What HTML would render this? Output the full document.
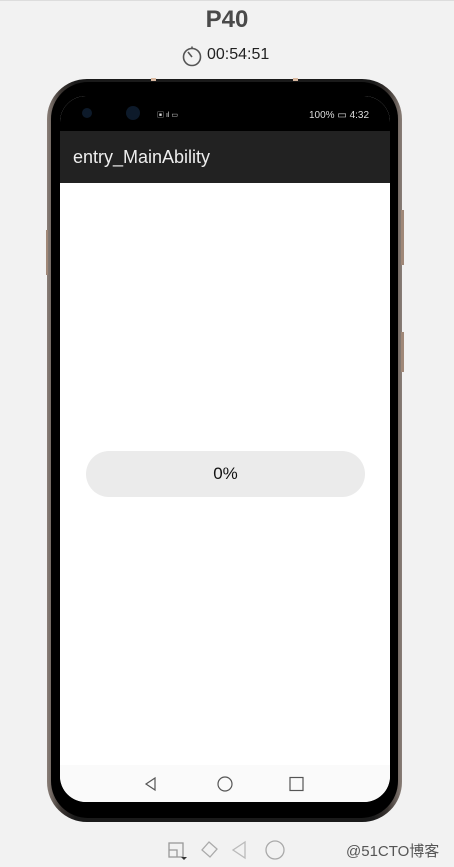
<!DOCTYPE html>
<html><head><meta charset="utf-8"><style>
*{margin:0;padding:0;box-sizing:border-box}
body{width:454px;height:867px;background:#f2f2f2;position:relative;overflow:hidden;font-family:"Liberation Sans","Noto Sans CJK SC",sans-serif}
.abs{position:absolute}
</style></head><body>
<div class="abs" style="left:0;top:0;width:454px;height:1px;background:#ddd"></div>
<div class="abs" style="left:0;top:6px;width:454px;text-align:center;font-size:24px;font-weight:bold;color:#4a4a4a">P40</div>
<svg class="abs" style="left:181px;top:45px" width="22" height="22" viewBox="0 0 22 22"><circle cx="11" cy="12" r="8.5" fill="none" stroke="#555" stroke-width="1.6"/><path d="M11 3.5V1.5M7 7l4 5" stroke="#555" stroke-width="1.6" fill="none"/></svg>
<div class="abs" style="left:207px;top:46px;font-size:16px;color:#222">00:54:51</div>

<div class="abs" style="left:47px;top:79px;width:355px;height:743px;border-radius:40px;background:linear-gradient(90deg,#8a7f78,#3a3431 4%,#1a1a1a 8%,#1a1a1a 92%,#3a3431 96%,#8a7f78);"></div>
<div class="abs" style="left:51px;top:82px;width:347px;height:736px;border-radius:37px;background:#000"></div>
<div class="abs" style="left:151px;top:78px;width:5px;height:3px;background:#d8b8a0"></div>
<div class="abs" style="left:293px;top:78px;width:5px;height:3px;background:#d8b8a0"></div>
<div class="abs" style="left:401px;top:210px;width:3px;height:55px;background:#a08878"></div>
<div class="abs" style="left:401px;top:332px;width:3px;height:40px;background:#a08878"></div>
<div class="abs" style="left:46px;top:230px;width:2px;height:45px;background:#a08878"></div>

<div class="abs" style="left:60px;top:96px;width:330px;height:706px;border-radius:26px;overflow:hidden;background:#fff">
  <div class="abs" style="left:0;top:0;width:330px;height:35px;background:#000;color:#ddd;font-size:10px">
    <div class="abs" style="left:22px;top:12px;width:10px;height:10px;border-radius:50%;background:#0d1a2a"></div>
    <div class="abs" style="left:66px;top:10px;width:14px;height:14px;border-radius:50%;background:#0d1a2a"></div>
    <div class="abs" style="left:97px;top:14px;font-size:7px;color:#ddd">▣ ıl ▭</div>
    <div class="abs" style="left:249px;top:14px">100% ▭ 4:32</div>
  </div>
  <div class="abs" style="left:0;top:35px;width:330px;height:52px;background:#222"></div>
  <div class="abs" style="left:13px;top:51px;color:#eee;font-size:18px">entry_MainAbility</div>
  <div class="abs" style="left:26px;top:355px;width:279px;height:46px;border-radius:23px;background:#ebebeb;text-align:center;line-height:46px;font-size:17px;color:#111">0%</div>
  <div class="abs" style="left:0;top:669px;width:330px;height:37px;background:#fafafa"></div>
  <svg class="abs" style="left:80px;top:680px" width="180" height="16"><path d="M15 2L6 8l9 6z" fill="none" stroke="#555" stroke-width="1.2"/><circle cx="85" cy="8" r="7" fill="none" stroke="#555" stroke-width="1.2"/><rect x="150" y="1.5" width="13" height="13" fill="none" stroke="#555" stroke-width="1.2"/></svg>
</div>

<svg class="abs" style="left:166px;top:838px" width="125" height="24"><rect x="3" y="5" width="14" height="14" fill="none" stroke="#999" stroke-width="1.3"/><path d="M3 12h8v7" fill="none" stroke="#999" stroke-width="1.3"/><path d="M15 19h6l-3 3z" fill="#333"/><path d="M43 4l8 7-7 8-8-7z" fill="none" stroke="#aaa" stroke-width="1.3"/><path d="M79 4L67 12l12 8z" fill="none" stroke="#bbb" stroke-width="1.3"/><circle cx="109" cy="12" r="9" fill="none" stroke="#aaa" stroke-width="1.3"/></svg>
<div class="abs" style="left:346px;top:840px;font-size:15px;color:#555">@51CTO博客</div>
</body></html>
